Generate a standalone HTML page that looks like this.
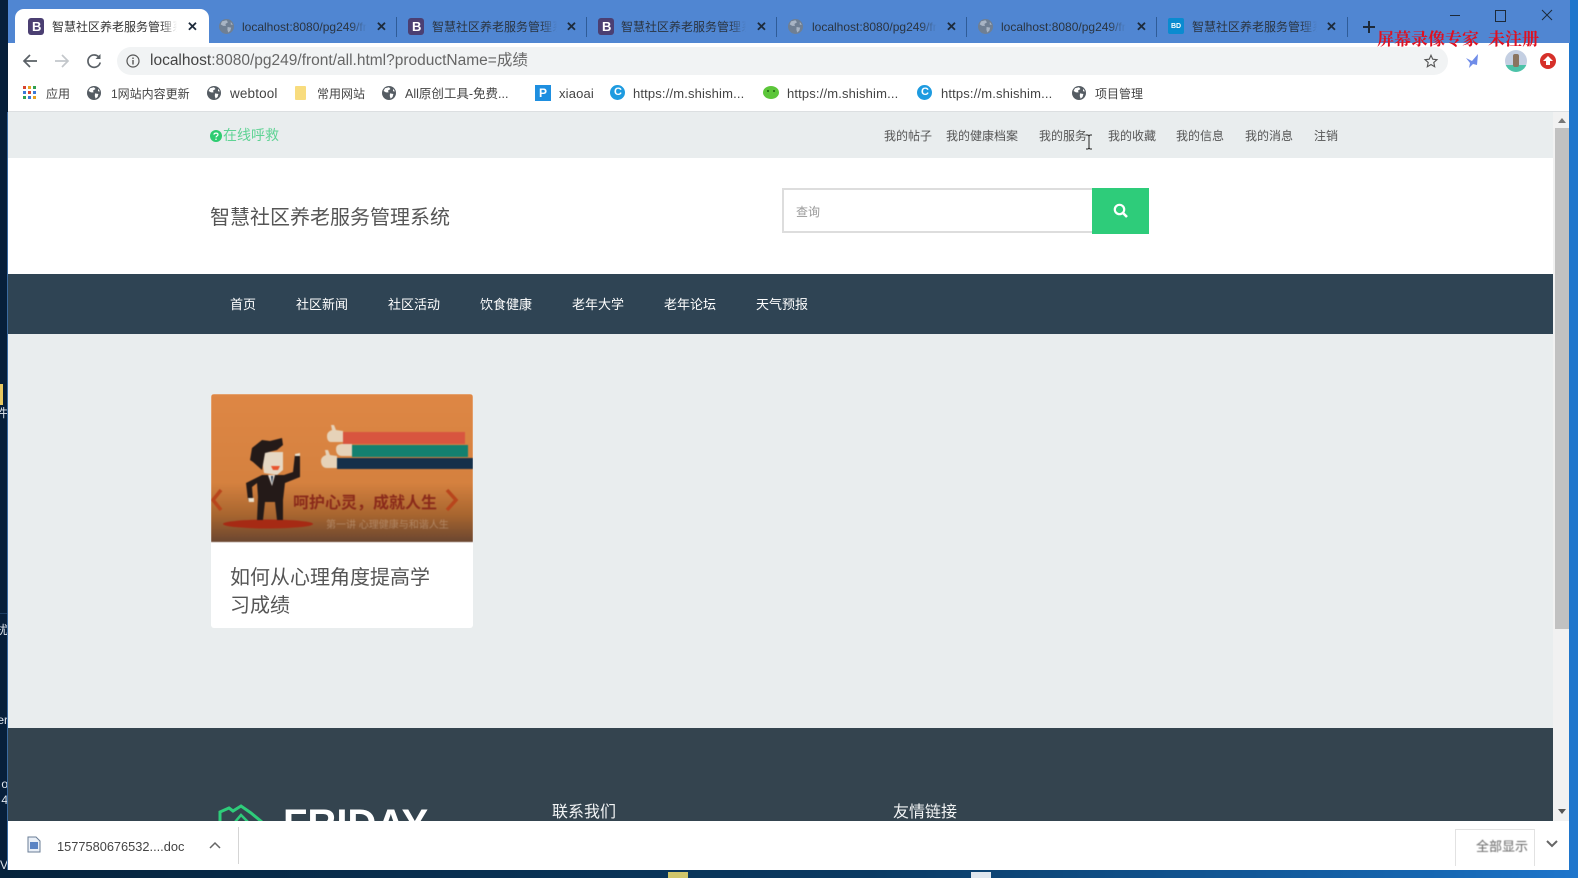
<!DOCTYPE html>
<html lang="zh">
<head>
<meta charset="utf-8">
<title>智慧社区养老服务管理系统</title>
<style>
html,body{margin:0;padding:0;width:1578px;height:878px;overflow:hidden;background:#0b2f4f;}
body{position:relative;font-family:"Liberation Sans","Noto Sans CJK SC",sans-serif;color:#333;}
.b{position:absolute;}
.t{position:absolute;white-space:nowrap;line-height:1;}
svg{position:absolute;overflow:visible;}
.tab{font-size:12px;color:#2a3440;width:125px;overflow:hidden;top:20px;height:14px;line-height:14px;-webkit-mask-image:linear-gradient(90deg,#000 86%,transparent);mask-image:linear-gradient(90deg,#000 86%,transparent);}
.x{font-size:13px;font-weight:bold;color:#1d2a3a;top:20px;}
.sep{position:absolute;top:17px;width:1px;height:20px;background:#2f5c98;}
.bm{font-size:12px;color:#444;top:88px;}
.ln{font-size:13px;top:87px;letter-spacing:.15px;}
.lk{font-size:12px;color:#555;top:130px;}
.nv{font-size:13px;color:#fff;top:298px;}
.ds{font-size:12px;color:#dfe6ee;right:0;}
</style>
</head>
<body>
<svg width="0" height="0" style="left:0;top:0">
<symbol id="gl" viewBox="0 0 14 14"><circle cx="7" cy="7" r="7" fill="#555c63"/><path d="M3 2.2L7 1.2L8.5 3L6 4.6L6.6 6.4L4 6.4L1.6 5ZM8 7.4L11.4 8L10.6 11L8.6 12.6L7.8 10ZM11 2.8L13 5.4L11 5.2Z" fill="#fff"/></symbol>
<symbol id="gt" viewBox="0 0 15 15"><circle cx="7.5" cy="7.5" r="7.5" fill="#6f7f93"/><path d="M3 2.4L7.4 1.3L9 3.2L6.4 5L7 6.9L4.2 6.9L1.7 5.4ZM8.6 8L12.2 8.6L11.3 11.8L9.2 13.5L8.4 10.8ZM11.8 3L13.9 5.8L11.8 5.6Z" fill="#a8b4c4"/></symbol>
</svg>
<!-- desktop edges -->
<div class="b" style="left:0;top:0;width:8px;height:878px;background:#071f3a;overflow:hidden">
  <div class="b" style="left:0;top:384px;width:3px;height:21px;background:#e8c860"></div>
  <div class="t ds" style="top:407px">件</div>
  <div class="b" style="left:0;top:613px;width:8px;height:1px;background:#1d3e63"></div>
  <div class="t ds" style="top:624px">扰</div>
  <div class="t ds" style="top:714px">er</div>
  <div class="t ds" style="top:778px">o</div>
  <div class="t ds" style="top:794px">4</div>
  <div class="t ds" style="top:859px">V</div>
</div>
<div class="b" style="left:7px;top:112px;width:1px;height:760px;background:#3a6aa0"></div>
<div class="b" style="left:1569px;top:0;width:9px;height:878px;background:#1f76cc"></div>
<div class="b" style="left:0;top:870px;width:1578px;height:8px;background:linear-gradient(90deg,#06233c,#0a3a62 55%,#1768b4 92%,#1f76cc)"></div>
<div class="b" style="left:668px;top:872px;width:20px;height:6px;background:#cfc56a"></div>
<div class="b" style="left:971px;top:872px;width:20px;height:6px;background:#dfe6ee"></div>

<!-- tab strip -->
<div class="b" style="left:8px;top:0;width:1562px;height:43px;background:#5086d2"></div>
<div class="b" style="left:15px;top:9px;width:194px;height:34px;background:#fff;border-radius:9px 9px 0 0"></div>

<!-- tab 1 -->
<div class="b" style="left:28px;top:18px;width:16px;height:17px;background:#4b3f72;border-radius:3px"></div>
<div class="t" style="left:32px;top:20px;font-size:13px;font-weight:bold;color:#fff">B</div>
<div class="t tab" style="left:52px;color:#333">智慧社区养老服务管理系统</div>
<div class="t x" style="left:187px">✕</div>
<!-- tab 2 -->
<svg style="left:219px;top:19px" width="15" height="15"><use href="#gt"/></svg>
<div class="t tab" style="left:242px">localhost:8080/pg249/front</div>
<div class="t x" style="left:376px">✕</div>
<div class="sep" style="left:396px"></div>
<!-- tab 3 -->
<div class="b" style="left:408px;top:18px;width:16px;height:17px;background:#4b3f72;border-radius:3px"></div>
<div class="t" style="left:412px;top:20px;font-size:13px;font-weight:bold;color:#fff">B</div>
<div class="t tab" style="left:432px">智慧社区养老服务管理系统</div>
<div class="t x" style="left:566px">✕</div>
<div class="sep" style="left:586px"></div>
<!-- tab 4 -->
<div class="b" style="left:598px;top:18px;width:16px;height:17px;background:#4b3f72;border-radius:3px"></div>
<div class="t" style="left:602px;top:20px;font-size:13px;font-weight:bold;color:#fff">B</div>
<div class="t tab" style="left:621px">智慧社区养老服务管理系统</div>
<div class="t x" style="left:756px">✕</div>
<div class="sep" style="left:776px"></div>
<!-- tab 5 -->
<svg style="left:788px;top:19px" width="15" height="15"><use href="#gt"/></svg>
<div class="t tab" style="left:812px">localhost:8080/pg249/front</div>
<div class="t x" style="left:946px">✕</div>
<div class="sep" style="left:966px"></div>
<!-- tab 6 -->
<svg style="left:978px;top:19px" width="15" height="15"><use href="#gt"/></svg>
<div class="t tab" style="left:1001px">localhost:8080/pg249/front</div>
<div class="t x" style="left:1136px">✕</div>
<div class="sep" style="left:1156px"></div>
<!-- tab 7 -->
<div class="b" style="left:1168px;top:18px;width:16px;height:16px;background:#0a8bd0;border-radius:2px"></div>
<div class="t" style="left:1171px;top:23px;font-size:7px;font-weight:bold;color:#fff">BD</div>
<div class="t tab" style="left:1192px">智慧社区养老服务管理系统</div>
<div class="t x" style="left:1326px">✕</div>
<div class="sep" style="left:1347px"></div>
<svg style="left:1362px;top:20px" width="14" height="14"><path d="M7 1V13M1 7H13" stroke="#1d2a3a" stroke-width="2" fill="none"/></svg>

<!-- window controls -->
<div class="b" style="left:1450px;top:15px;width:10px;height:1px;background:#1d2a3a"></div>
<div class="b" style="left:1495px;top:10px;width:9px;height:10px;border:1px solid #1d2a3a"></div>
<svg style="left:1541px;top:9px" width="12" height="12"><path d="M1 1L11 11M11 1L1 11" stroke="#1d2a3a" stroke-width="1" fill="none"/></svg>

<!-- toolbar -->
<div class="b" style="left:8px;top:43px;width:1561px;height:69px;background:#fff"></div>
<div class="b" style="left:8px;top:111px;width:1561px;height:1px;background:#dcdfe1"></div>
<div class="b" style="left:117px;top:47px;width:1331px;height:28px;background:#f1f3f4;border-radius:14px"></div>
<svg style="left:22px;top:53px" width="16" height="16"><path d="M15 8H2M8 2L2 8L8 14" stroke="#5a6066" stroke-width="1.7" fill="none"/></svg>
<svg style="left:54px;top:53px" width="16" height="16"><path d="M1 8H14M8 2L14 8L8 14" stroke="#c3c7cb" stroke-width="1.7" fill="none"/></svg>
<svg style="left:86px;top:53px" width="16" height="16"><path d="M13.5 5A6.2 6.2 0 1 0 14.2 9.5" stroke="#5a6066" stroke-width="1.7" fill="none"/><path d="M14.5 1V6H9.5Z" fill="#5a6066"/></svg>
<svg style="left:126px;top:54px" width="14" height="14"><circle cx="7" cy="7" r="6" stroke="#555" stroke-width="1.2" fill="none"/><path d="M7 6V10.5M7 3.5V5" stroke="#555" stroke-width="1.4"/></svg>
<div class="t" style="left:150px;top:53px;font-size:15.5px;color:#666"><span style="color:#444">localhost</span>:8080/pg249/front/all.html?productName=成绩</div>
<svg style="left:1424px;top:54px" width="14" height="14" viewBox="0 0 16 16"><path d="M8 1.5L10 6L14.8 6.5L11.2 9.7L12.2 14.5L8 12L3.8 14.5L4.8 9.7L1.2 6.5L6 6Z" stroke="#555" stroke-width="1.3" fill="none"/></svg>
<svg style="left:1464px;top:53px" width="16" height="16"><path d="M14 1L8 8L2 5L6 10L5 15L9 11L13 12Z" fill="#6f8ce8"/></svg>
<div class="b" style="left:1505px;top:50px;width:22px;height:22px;border-radius:50%;background:linear-gradient(#c4cfe2 68%,#4cc2a8 68%)"></div>
<div class="b" style="left:1513px;top:54px;width:6px;height:13px;background:#8a7460;border-radius:2px"></div>
<div class="b" style="left:1540px;top:53px;width:16px;height:16px;border-radius:50%;background:#d6302a"></div>
<svg style="left:1540px;top:53px" width="16" height="16"><path d="M8 3L13 8H10V12H6V8H3Z" fill="#fff"/></svg>
<div class="t" style="left:1377px;top:31px;font-size:17px;font-weight:bold;color:#e01020;font-family:'Liberation Serif','Noto Serif CJK SC',serif">屏幕录像专家</div>
<div class="t" style="left:1488px;top:31px;font-size:17px;font-weight:bold;color:#e01020;font-family:'Liberation Serif','Noto Serif CJK SC',serif">未注册</div>

<!-- bookmarks -->
<svg style="left:23px;top:86px" width="14" height="14"><rect x="0" y="0" width="3" height="3" fill="#d8452f"/><rect x="5" y="0" width="3" height="3" fill="#e8a020"/><rect x="10" y="0" width="3" height="3" fill="#2fa050"/><rect x="0" y="5" width="3" height="3" fill="#3a78d8"/><rect x="5" y="5" width="3" height="3" fill="#d8452f"/><rect x="10" y="5" width="3" height="3" fill="#3a78d8"/><rect x="0" y="10" width="3" height="3" fill="#2fa050"/><rect x="5" y="10" width="3" height="3" fill="#3a78d8"/><rect x="10" y="10" width="3" height="3" fill="#e8a020"/></svg>
<div class="t bm" style="left:46px">应用</div>
<svg style="left:87px;top:86px" width="14" height="14"><use href="#gl"/></svg>
<div class="t bm" style="left:111px">1网站内容更新</div>
<svg style="left:207px;top:86px" width="14" height="14"><use href="#gl"/></svg>
<div class="t bm ln" style="left:230px;font-size:13.5px">webtool</div>
<div class="b" style="left:295px;top:86px;width:11px;height:14px;background:#f8dc7e;border-radius:1px"></div>
<div class="t bm" style="left:317px">常用网站</div>
<svg style="left:382px;top:86px" width="14" height="14"><use href="#gl"/></svg>
<div class="t bm" style="left:405px;font-size:12.5px">All原创工具-免费...</div>
<div class="b" style="left:535px;top:85px;width:16px;height:16px;background:#1e8fe0"></div>
<div class="t" style="left:539px;top:87px;font-size:12px;font-weight:bold;color:#fff">P</div>
<div class="t bm ln" style="left:559px">xiaoai</div>
<div class="b" style="left:610px;top:85px;width:15px;height:15px;background:#1e9be0;border-radius:50%"></div>
<div class="t" style="left:614px;top:87px;font-size:11px;font-weight:bold;color:#fff">C</div>
<div class="t bm ln" style="left:633px">https://m.shishim...</div>
<div class="b" style="left:763px;top:86px;width:16px;height:13px;background:#5cc63a;border-radius:50%"></div>
<div class="b" style="left:767px;top:90px;width:2px;height:2px;background:#2c7a1c"></div>
<div class="b" style="left:773px;top:90px;width:2px;height:2px;background:#2c7a1c"></div>
<div class="t bm ln" style="left:787px">https://m.shishim...</div>
<div class="b" style="left:917px;top:85px;width:15px;height:15px;background:#1e9be0;border-radius:50%"></div>
<div class="t" style="left:921px;top:87px;font-size:11px;font-weight:bold;color:#fff">C</div>
<div class="t bm ln" style="left:941px">https://m.shishim...</div>
<svg style="left:1072px;top:86px" width="14" height="14"><use href="#gl"/></svg>
<div class="t bm" style="left:1095px">项目管理</div>

<!-- page -->
<div class="b" style="left:8px;top:112px;width:1545px;height:709px;background:#e9edee"></div>
<div class="b" style="left:8px;top:158px;width:1545px;height:116px;background:#fff"></div>

<!-- top bar -->
<svg style="left:210px;top:130px" width="12" height="12"><circle cx="6" cy="6" r="6" fill="#2ecc71"/><path d="M4 4.6C4 2.6 8 2.6 8 4.6C8 6 6 6 6 7.4M6 8.6V10" stroke="#fff" stroke-width="1.2" fill="none"/></svg>
<div class="t" style="left:223px;top:128px;font-size:14px;color:#5fd394">在线呼救</div>
<div class="t lk" style="left:884px">我的帖子</div>
<div class="t lk" style="left:946px">我的健康档案</div>
<div class="t lk" style="left:1039px">我的服务</div>
<div class="t lk" style="left:1108px">我的收藏</div>
<div class="t lk" style="left:1176px">我的信息</div>
<div class="t lk" style="left:1245px">我的消息</div>
<div class="t lk" style="left:1314px">注销</div>
<svg style="left:1085px;top:134px" width="8" height="16"><path d="M1 1H3L4 2L5 1H7M4 2V14M1 15H3L4 14L5 15H7" stroke="#222" stroke-width="1" fill="none"/></svg>

<!-- header -->
<div class="t" style="left:210px;top:208px;font-size:20px;color:#555">智慧社区养老服务管理系统</div>
<div class="b" style="left:782px;top:188px;width:309px;height:41px;border:2px solid #ddd;border-right:0;background:#fff"></div>
<div class="t" style="left:796px;top:206px;font-size:12px;color:#999">查询</div>
<div class="b" style="left:1092px;top:188px;width:57px;height:46px;background:#2ecc7a"></div>
<svg style="left:1113px;top:203px" width="16" height="16"><circle cx="6.5" cy="6.5" r="4.7" stroke="#fff" stroke-width="2.2" fill="none"/><path d="M10 10L14 14" stroke="#fff" stroke-width="2.6"/></svg>

<!-- nav -->
<div class="b" style="left:8px;top:274px;width:1545px;height:60px;background:#2f4454"></div>
<div class="t nv" style="left:230px">首页</div>
<div class="t nv" style="left:296px">社区新闻</div>
<div class="t nv" style="left:388px">社区活动</div>
<div class="t nv" style="left:480px">饮食健康</div>
<div class="t nv" style="left:572px">老年大学</div>
<div class="t nv" style="left:664px">老年论坛</div>
<div class="t nv" style="left:756px">天气预报</div>

<!-- card -->
<div class="b" style="left:211px;top:394px;width:262px;height:234px;background:#fff;border-radius:3px;overflow:hidden">
<svg style="left:0;top:0;filter:blur(.5px)" width="262" height="148" viewBox="0 0 262 148">
<defs><linearGradient id="g" x1="0" y1="0" x2="0" y2="1"><stop offset="0" stop-color="#de8745"/><stop offset=".6" stop-color="#d5813f"/><stop offset=".82" stop-color="#a7652f"/><stop offset="1" stop-color="#6b4630"/></linearGradient></defs>
<rect width="262" height="148" fill="url(#g)"/>
<rect x="132" y="38" width="122" height="12" fill="#d8553f"/>
<rect x="141" y="51" width="116" height="12" fill="#14806f"/>
<rect x="126" y="64" width="136" height="11" fill="#15304a"/>
<path d="M116 42C116 38 119 37 121 36L120 31L123 31L125 36L132 37V48H120C117 48 116 45 116 42Z" fill="#e6d2b8"/>
<path d="M125 55C125 51 128 50 132 50H141V62H131C127 62 125 59 125 55Z" fill="#e6d2b8"/>
<path d="M110 67C110 63 113 62 115 61L114 56L117 56L119 61L126 62V74H116C112 74 110 71 110 67Z" fill="#e6d2b8"/>
<ellipse cx="57" cy="130" rx="45" ry="4.5" fill="#a62a14"/>
<path d="M51 81L73 81L82 78L84 60H89V83L74 89L72 106V126H66L64 108L54 108L52 126H46L47 103L46 89L41 93L42 106L37 106L35 89Z" fill="#241a18"/>
<path d="M84 60L89 59V62H84ZM37 104H43V108H38Z" fill="#eadfcc"/>
<path d="M50 58H72L72 76L66 81L53 79Z" fill="#e6d8c4"/>
<path d="M39 66L41 54L51 46L59 47L71 44L72 51L66 56L54 59L51 76L42 68Z" fill="#241a18"/>
<path d="M60 72H69L67 76H62Z" fill="#e8552f"/>
<path d="M57 81H64L61 92Z" fill="#e8e0d8"/><path d="M60 82H62L61 90Z" fill="#15304a"/>
<path d="M10 96L2 106L10 116" stroke="#b8451c" stroke-width="3.5" fill="none"/>
<path d="M236 96L245 106L236 116" stroke="#b8451c" stroke-width="3.5" fill="none"/>
<text x="82" y="114" font-size="16" font-weight="bold" fill="#8a2a1a" font-family="Liberation Sans,Noto Sans CJK SC,sans-serif">呵护心灵，成就人生</text>
<text x="115" y="134" font-size="10" fill="#c9a98c" opacity=".55" font-family="Liberation Sans,Noto Sans CJK SC,sans-serif">第一讲 心理健康与和谐人生</text>
</svg>
<div class="t" style="left:19px;top:170px;width:210px;font-size:20px;line-height:28px;color:#555;white-space:normal">如何从心理角度提高学习成绩</div>
</div>

<!-- footer -->
<div class="b" style="left:8px;top:728px;width:1545px;height:93px;background:#34444f;overflow:hidden">
<svg style="left:210px;top:76px" width="46" height="20"><path d="M2 18L2 8L11 4L15 7L23 2L33 9L44 18" stroke="#2ecc7a" stroke-width="3" fill="none"/><path d="M17 18L23 11L30 18" stroke="#2ecc7a" stroke-width="2.5" fill="none"/></svg>
<div class="t" style="left:275px;top:76px;font-size:40px;font-weight:bold;color:#fff">FRIDAY</div>
<div class="t" style="left:544px;top:77px;font-size:16px;color:#f2f4f5">联系我们</div>
<div class="t" style="left:885px;top:77px;font-size:16px;color:#f2f4f5">友情链接</div>
</div>

<!-- scrollbar -->
<div class="b" style="left:1553px;top:112px;width:16px;height:709px;background:#f1f1f1"></div>
<div class="b" style="left:1555px;top:128px;width:14px;height:501px;background:#c1c1c1"></div>
<svg style="left:1558px;top:118px" width="8" height="5"><path d="M4 0L8 5H0Z" fill="#777"/></svg>
<svg style="left:1558px;top:809px" width="8" height="5"><path d="M0 0H8L4 5Z" fill="#555"/></svg>

<!-- download bar -->
<div class="b" style="left:8px;top:821px;width:1561px;height:49px;background:#fff"></div>
<svg style="left:27px;top:836px" width="14" height="17"><path d="M1 1H9L13 5V16H1Z" stroke="#6a7d96" stroke-width="1" fill="#eaf0f8"/><rect x="3" y="6" width="8" height="7" fill="#5b84c4"/></svg>
<div class="t" style="left:57px;top:841px;font-size:12.8px;color:#444">1577580676532....doc</div>
<svg style="left:209px;top:841px" width="12" height="8"><path d="M1 7L6 2L11 7" stroke="#666" stroke-width="1.5" fill="none"/></svg>
<div class="b" style="left:238px;top:827px;width:1px;height:37px;background:#d5d5d5"></div>
<div class="b" style="left:1455px;top:829px;width:78px;height:36px;border:1px solid #e2e2e2;border-bottom:0;background:#fff"></div>
<div class="t" style="left:1476px;top:840px;font-size:13px;color:#666;filter:blur(.6px)">全部显示</div>
<svg style="left:1546px;top:840px" width="12" height="8"><path d="M1 1L6 6L11 1" stroke="#666" stroke-width="2" fill="none"/></svg>
</body>
</html>
